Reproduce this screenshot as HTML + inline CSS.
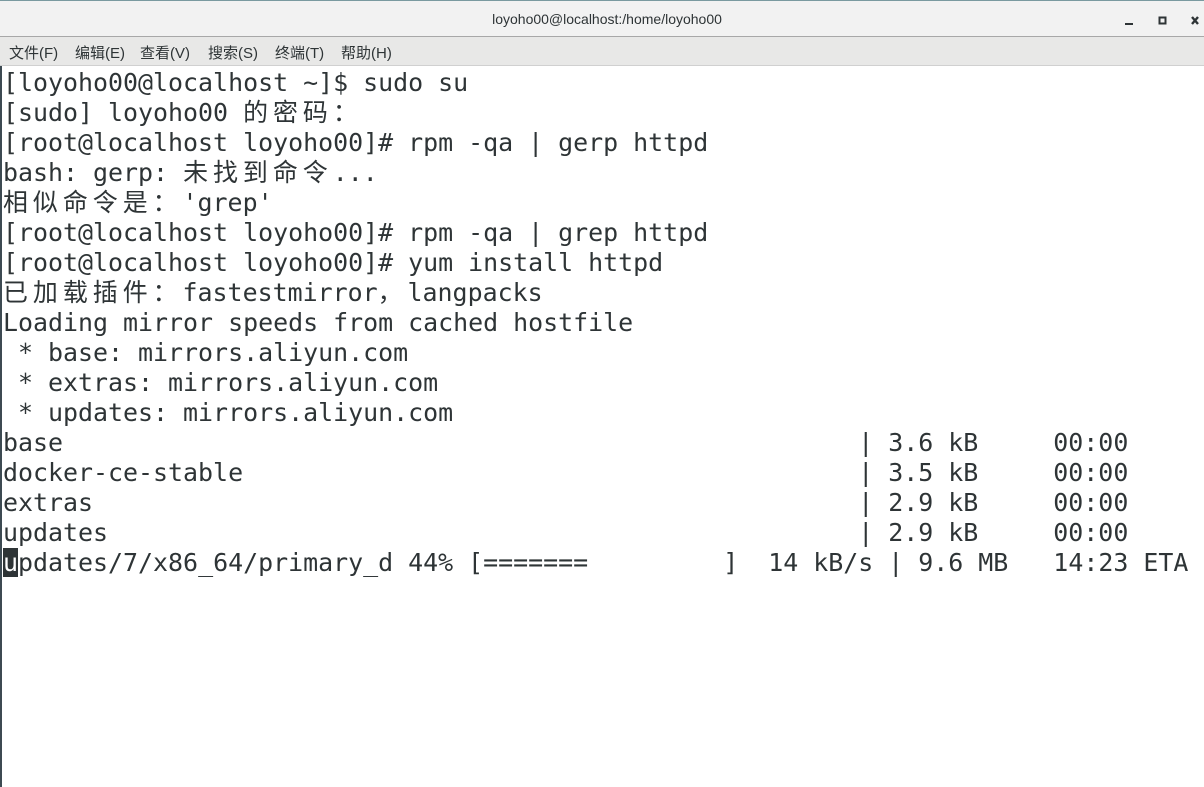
<!DOCTYPE html>
<html><head><meta charset="utf-8"><style>
html,body{margin:0;padding:0;width:1204px;height:787px;overflow:hidden;background:#fff}
#title{position:absolute;left:0;top:0;width:1204px;height:37px;background:#f2f2f2;border-top:1px solid #7a9aa0;box-sizing:border-box;border-bottom:1px solid #a8a8a8}
#title .t{position:absolute;left:0;width:1214px;text-align:center;top:10px;font:14px "Liberation Sans","Noto Sans CJK SC",sans-serif;color:#2e3436}
#menu{position:absolute;left:0;top:37px;width:1204px;height:29px;background:#e8e8e7;border-bottom:1px solid #d0d0d0;box-sizing:border-box;font:15px "Liberation Sans","Noto Sans CJK SC",sans-serif;color:#2e3436}
#menu span{position:absolute;top:5px}
#term{position:absolute;left:0;top:66px;width:1204px;height:721px;background:#fff;border-left:2px solid #3d4a52;box-sizing:border-box}
pre{position:absolute;left:1px;top:2px;margin:0;font:24.93px/30px "DejaVu Sans Mono","Noto Sans CJK SC",monospace;color:#2e3436;white-space:pre}
.c{letter-spacing:5px}
.cur{background:#2e3436;color:#fff}
</style></head><body>
<div id="title"><div class="t">loyoho00@localhost:/home/loyoho00</div>
<svg style="position:absolute;left:1120px;top:12px" width="80" height="16"><rect x="5" y="10" width="8" height="2" fill="#2e3436"/><rect x="39.5" y="4.5" width="6" height="6" fill="none" stroke="#2e3436" stroke-width="2"/><path d="M72 4l6 7M78 4l-6 7" stroke="#2e3436" stroke-width="2.4"/></svg>
</div>
<div id="menu"><span style="left:9px">文件(F)</span><span style="left:75px">编辑(E)</span><span style="left:140px">查看(V)</span><span style="left:208px">搜索(S)</span><span style="left:275px">终端(T)</span><span style="left:341px">帮助(H)</span></div>
<div id="term"><pre>[loyoho00@localhost ~]$ sudo su
[sudo] loyoho00 <span class="c">的密码：</span>
[root@localhost loyoho00]# rpm -qa | gerp httpd
bash: gerp: <span class="c">未找到命令</span>...
<span class="c">相似命令是：</span>'grep'
[root@localhost loyoho00]# rpm -qa | grep httpd
[root@localhost loyoho00]# yum install httpd
<span class="c">已加载插件：</span>fastestmirror<span class="c">，</span>langpacks
Loading mirror speeds from cached hostfile
 * base: mirrors.aliyun.com
 * extras: mirrors.aliyun.com
 * updates: mirrors.aliyun.com
base                                                     | 3.6 kB     00:00
docker-ce-stable                                         | 3.5 kB     00:00
extras                                                   | 2.9 kB     00:00
updates                                                  | 2.9 kB     00:00
<span class="cur">u</span>pdates/7/x86_64/primary_d 44% [=======         ]  14 kB/s | 9.6 MB   14:23 ETA</pre></div>
</body></html>
